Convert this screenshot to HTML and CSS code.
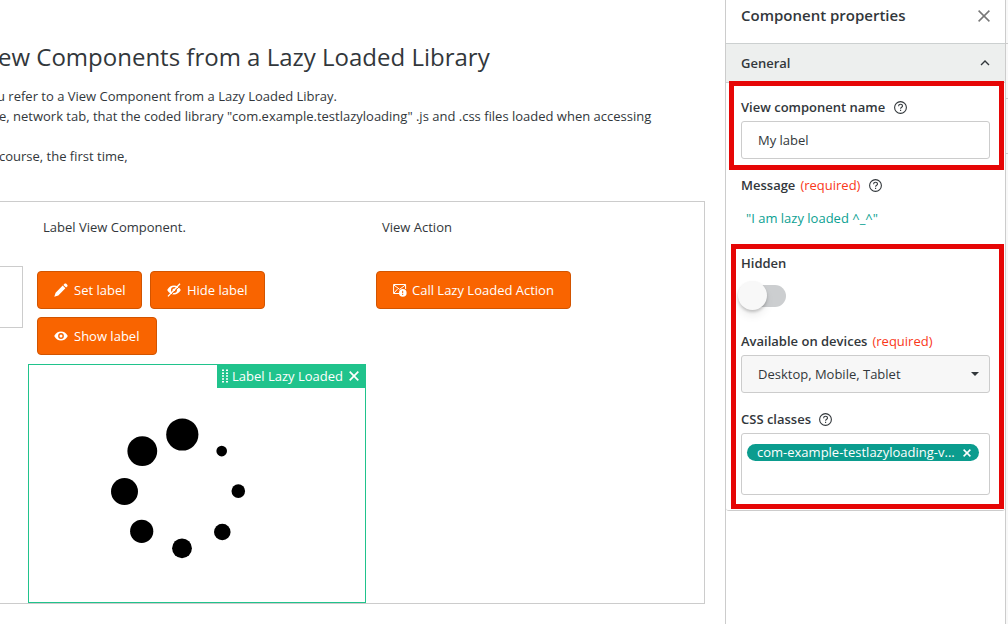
FILE: index.html
```html
<!DOCTYPE html>
<html lang="en">
<head>
<meta charset="utf-8">
<title>Component properties</title>
<link rel="stylesheet" href="styles.css">
</head>
<body>
<div class="app">
  <main class="canvas">
    <h1 class="title">ew Components from a Lazy Loaded Library</h1>
    <div class="intro">
      <p class="line-refer">u refer to a View Component from a Lazy Loaded Libray.</p>
      <p class="line-network">e, network tab, that the coded library "com.example.testlazyloading" .js and .css files loaded when accessing</p>
      <p>&nbsp;</p>
      <p class="line-course">course, the first time,</p>
    </div>
    <section class="grid">
      <div class="col-first"><div class="input-edge"></div></div>
      <div class="col-label">
        <div class="col-title">Label View Component.</div>
        <div class="buttons">
          <button class="btn btn-set"><svg class="icon" viewBox="0 0 14 14"><path d="M.3 13.700l1.300-4L8.700 2.600l2.700 2.700L4.300 12.400zM9.400 1.900l1.100-1.100c.5-.5 1.300-.5 1.800 0l.9.9c.5.5.5 1.300 0 1.800l-1.100 1.100z"/></svg>Set label</button>
          <button class="btn btn-hide"><svg class="icon" viewBox="0 0 14 14"><path fill-rule="evenodd" d="M.2 7C1.900 3.900 4.200 2.600 7 2.600s5.100 1.300 6.800 4.400C12.100 10.100 9.800 11.400 7 11.400S1.900 10.100.2 7zM7 4a3 3 0 1 0 0 6 3 3 0 0 0 0-6zm0 1.500a1.500 1.500 0 1 1 0 3 1.500 1.500 0 0 1 0-3z"/><path class="cut" d="M2.300 13.800L14 2"/><path class="stroke" d="M1 13.400L13 .8"/></svg>Hide label</button>
          <button class="btn btn-show"><svg class="icon" viewBox="0 0 14 14"><path fill-rule="evenodd" d="M.2 7C1.900 3.800 4.200 2.500 7 2.500s5.100 1.300 6.800 4.500C12.100 10.200 9.800 11.500 7 11.500S1.900 10.200.2 7zM7 4.100a2.900 2.900 0 1 0 0 5.800 2.900 2.900 0 0 0 0-5.800zm0 1.400a1.500 1.500 0 1 1 0 3 1.500 1.500 0 0 1 0-3z"/></svg>Show label</button>
        </div>
        <div class="widget">
          <div class="tag">
            <svg class="grip" viewBox="0 0 7 14"><path d="M0 .5h2v1.500H0zM4 .5h2v1.500h-2zM0 3.500h2v1.500H0zM4 3.500h2v1.500h-2zM0 6.300h2v1.500H0zM4 6.300h2v1.500h-2zM0 9.200h2v1.500H0zM4 9.200h2v1.500h-2zM0 12h2v1.500H0zM4 12h2v1.500h-2z"/></svg>
            <span class="tag-text">Label Lazy Loaded</span>
            <svg class="tag-x" viewBox="0 0 10 10"><path d="M.7.7l8.600 8.600M9.300.7L.7 9.300"/></svg>
          </div>
          <svg class="spinner" viewBox="110 418 136 142">
            <circle cx="182.300" cy="434.500" r="16.100"/><circle cx="142.300" cy="451.100" r="14.900"/><circle cx="124.500" cy="491.500" r="13.500"/><circle cx="141.700" cy="531.300" r="11.600"/><circle cx="182" cy="548.300" r="9.900"/><circle cx="222.300" cy="532" r="8.300"/><circle cx="238.300" cy="491.100" r="6.800"/><circle cx="221.700" cy="451.100" r="5.300"/>
          </svg>
        </div>
      </div>
      <div class="col-action">
        <div class="col-title">View Action</div>
        <div class="buttons">
          <button class="btn btn-call"><svg class="icon" viewBox="0 0 14 14"><path class="stroke thin" d="M6 10.500H.6V1.500h12v4.500M.8 2l5.800 4.300L12.400 2M.8 10.200L4.600 6"/><circle cx="9.800" cy="9.900" r="3.800"/><path class="mark" d="M9.700 7.800v2.500M9.700 11v1"/></svg>Call Lazy Loaded Action</button>
        </div>
      </div>
    </section>
  </main>
  <aside class="panel">
    <header class="panel-head"><span class="panel-title">Component properties</span>
      <svg class="close" viewBox="0 0 12 12"><path d="M.6.6l10.800 10.800M11.400.6L.6 11.400"/></svg></header>
    <div class="section-head"><span>General</span><svg class="chevron" viewBox="0 0 10 6"><path d="M1 5l4-4 4 4"/></svg></div>
    <div class="section">
      <div class="label"><b>View component name</b><svg class="help help-wide" viewBox="0 0 13 13"><circle cx="6.500" cy="6.500" r="5.900"/><path d="M4.600 5.200c0-2.600 3.900-2.400 3.900-.2 0 1.300-1.900 1.300-1.900 2.700M6.600 8.700v1.300"/></svg></div>
      <div class="field">My label</div>
      <div class="label"><b>Message</b><span class="req">(required)</span><svg class="help help-wide" viewBox="0 0 13 13"><circle cx="6.500" cy="6.500" r="5.900"/><path d="M4.600 5.200c0-2.600 3.900-2.400 3.900-.2 0 1.300-1.900 1.300-1.900 2.700M6.600 8.700v1.300"/></svg></div>
      <div class="expression">"I am lazy loaded ^_^"</div>
      <div class="label"><b>Hidden</b></div>
      <div class="toggle"><div class="track"></div><div class="knob"></div></div>
      <div class="label"><b>Available on devices</b><span class="req">(required)</span></div>
      <div class="field select"><span>Desktop, Mobile, Tablet</span><i class="caret"></i></div>
      <div class="label"><b>CSS classes</b><svg class="help" viewBox="0 0 13 13"><circle cx="6.500" cy="6.500" r="5.900"/><path d="M4.600 5.200c0-2.600 3.900-2.400 3.900-.2 0 1.300-1.900 1.300-1.900 2.700M6.600 8.700v1.300"/></svg></div>
      <div class="chips"><div class="chip"><span>com-example-testlazyloading-v...</span><svg viewBox="0 0 8 8"><path d="M.6.6l6.800 6.800M7.400.6L.6 7.400"/></svg></div></div>
    </div>
    <div class="mark-box mark-name"></div>
    <div class="mark-box mark-rest"></div>
  </aside>
  <div class="rail"><i></i><i></i><i></i></div>
</div>
</body>
</html>
```

FILE: styles.css
```css
* { box-sizing: border-box; }
body { margin: 0; width: 1008px; height: 624px; overflow: hidden; background: #fff; color: #32373b; font: 13px/20px "Open Sans", sans-serif; }
h1, p { margin: 0; font-weight: 400; }
svg { display: block; flex: none; }
.app { display: flex; height: 624px; }
.canvas { width: 725px; overflow: hidden; white-space: nowrap; }
.title { margin-left: -2px; padding-top: 41px; height: 86px; font-size: 24px; line-height: 32px; }
.intro { height: 115px; }
.line-refer { margin-left: -3px; }
.line-network, .line-course { margin-left: -1px; }
.grid { display: flex; width: 705px; height: 403px; border: 1px solid #ccc; border-left: 0; }
.col-first { width: 28px; padding-top: 64px; }
.input-edge { width: 23px; height: 62px; border: 1px solid #ccc; border-left: 0; }
.col-label { width: 338px; }
.col-title { padding: 15px 0 0 15px; height: 69px; }
.col-action .col-title { padding-left: 16px; }
.buttons { display: flex; flex-wrap: wrap; gap: 8px; padding-left: 9px; }
.btn { display: flex; align-items: center; gap: 6px; height: 38px; padding: 0 0 0 16px; border: 1px solid #d25400; border-radius: 4px; background: #f96400; color: #fff; font: 13px/20px "Open Sans", sans-serif; white-space: nowrap; }
.btn-set { width: 105px; }
.btn-hide { width: 115px; }
.btn-show { width: 120px; }
.btn-call { width: 195px; gap: 5px; }
.icon { width: 14px; height: 14px; fill: #fff; }
.icon .stroke { fill: none; stroke: #fff; stroke-width: 1.3; }
.icon .thin { stroke-width: 1; }
.icon .cut { fill: none; stroke: #f96400; stroke-width: 1; }
.icon .mark { stroke: #f96400; stroke-width: 1; }
.widget { margin-top: 9px; width: 338px; height: 239px; border: 1px solid #20c38c; }
.tag { display: flex; align-items: center; width: 149px; height: 24px; margin: -1px -1px 0 auto; padding-left: 5px; background: #20c38c; color: #fff; }
.grip { width: 7px; height: 14px; fill: #fff; }
.tag-text { margin-left: 3px; width: 117px; }
.tag-x { width: 10px; height: 10px; fill: none; stroke: #fff; stroke-width: 1.7; }
.spinner { width: 136px; height: 142px; margin: 30px 0 0 81px; }
.col-action { flex: 1; }
.col-action .buttons { padding-left: 10px; }
.panel { position: relative; width: 281px; border: solid #ccc; border-width: 0 1px; }
.panel-head { display: flex; justify-content: space-between; height: 43px; padding: 5px 15px 0; font-size: 15px; line-height: 20px; font-weight: 600; }
.close { width: 12px; height: 12px; margin-top: 5px; fill: none; stroke: #777; stroke-width: 1.5; }
.section-head { display: flex; align-items: center; justify-content: space-between; height: 40px; padding: 0 15px; border: solid #ccd0d0; border-width: 1px 0; background: #edefee; font-weight: 600; }
.chevron { width: 10px; height: 6px; fill: none; stroke: #32373b; stroke-width: 1.4; }
.section { height: 428px; padding: 14px 15px 0; border-bottom: 1px solid #ccc; border-radius: 0 0 3px 3px; }
.label { display: flex; align-items: center; height: 20px; }
.label b { font-weight: 600; }
.req { margin-left: 5px; color: #f9381a; }
.help { width: 13px; height: 13px; margin-left: 8px; fill: none; stroke: #32373b; stroke-width: 1.1; }
.help-wide { margin-left: 9px; }
.field { height: 38px; margin: 4px 0 16px; padding: 8px 16px; border: 1px solid #ccc; border-radius: 3px; }
.expression { padding: 13px 0 0 5px; height: 58px; color: #0b9f92; }
.toggle { display: grid; width: 48px; height: 58px; margin-left: -3px; align-items: start; }
.track { grid-area: 1 / 1; width: 36px; height: 22px; margin: 12px 0 0 12px; border-radius: 11px; background: #ccced0; }
.knob { grid-area: 1 / 1; width: 29px; height: 29px; margin-top: 8px; border-radius: 50%; background: #f8f8f8; box-shadow: 0 2px 3px #0003, 0 6px 8px #0001; }
.select { display: flex; align-items: center; justify-content: space-between; padding: 0 10px 0 16px; background: #f7f7f7; }
.caret { border: solid transparent; border-width: 4px 4px 0; border-top-color: #32373b; }
.chips { height: 62px; margin-top: 4px; padding: 10px 5px; border: 1px solid #ccc; border-radius: 3px; }
.chip { display: flex; align-items: center; justify-content: space-between; width: 232px; height: 17px; padding: 0 8px 0 10px; border-radius: 9px; background: #0b9c8e; color: #fff; line-height: 17px; }
.chip svg { width: 8px; height: 8px; fill: none; stroke: #fff; stroke-width: 1.5; }
.mark-box { position: absolute; border: 5px solid #e60606; }
.mark-name { left: 3px; top: 81px; width: 275px; height: 89px; }
.mark-rest { left: 5px; top: 244px; width: 273px; height: 265px; }
.rail { width: 2px; background: #f8f8f8; }
.rail i { display: block; height: 55px; border-bottom: 1px solid #ccc; }
.rail i:first-child { height: 44px; }
```
